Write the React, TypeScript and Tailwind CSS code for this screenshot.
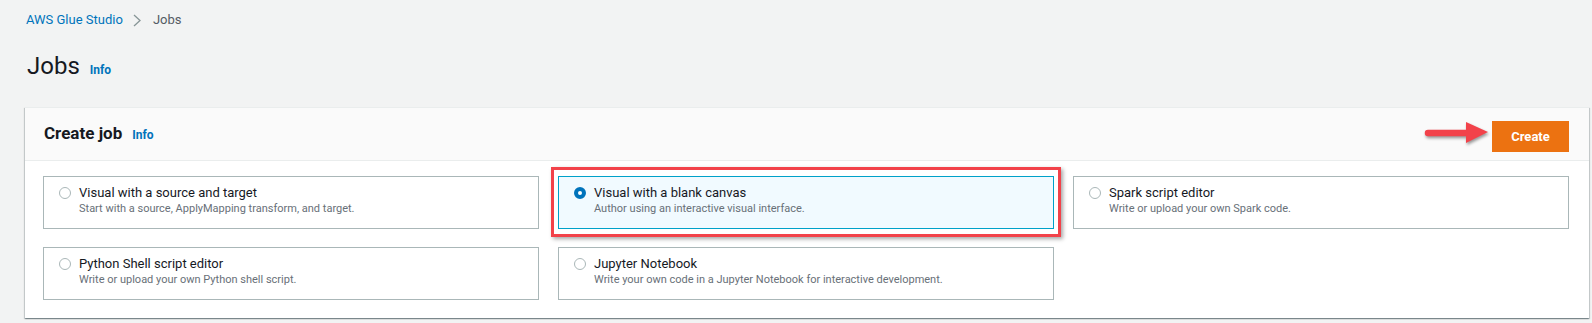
import React from "react";

type JobOption = {
  id: string;
  title: string;
  description: string;
};

const JOB_OPTIONS: JobOption[] = [
  {
    id: "visual-source-target",
    title: "Visual with a source and target",
    description: "Start with a source, ApplyMapping transform, and target.",
  },
  {
    id: "visual-blank",
    title: "Visual with a blank canvas",
    description: "Author using an interactive visual interface.",
  },
  {
    id: "spark",
    title: "Spark script editor",
    description: "Write or upload your own Spark code.",
  },
  {
    id: "python-shell",
    title: "Python Shell script editor",
    description: "Write or upload your own Python shell script.",
  },
  {
    id: "jupyter",
    title: "Jupyter Notebook",
    description:
      "Write your own code in a Jupyter Notebook for interactive development.",
  },
];

const SELECTED = "visual-blank";

// ── Breadcrumb chevron ───────────────────────────────────

function Chevron() {
  return (
    <svg width="8" height="13" viewBox="0 0 8 13" className="shrink-0">
      <polyline
        points="1,1 7,6.5 1,12"
        fill="none"
        stroke="#879596"
        strokeWidth="1.3"
      />
    </svg>
  );
}

// ── Annotation arrow ─────────────────────────────────────

function RedArrow() {
  return (
    <svg
      width="66"
      height="22"
      viewBox="0 0 66 22"
      className="absolute right-full top-[8px] mr-[2px] drop-shadow-[1px_2px_1.5px_rgba(0,0,0,0.4)]"
    >
      <line
        x1="4"
        y1="11"
        x2="46"
        y2="11"
        stroke="#f2424a"
        strokeWidth="6.5"
        strokeLinecap="round"
      />
      <polygon points="42,0 64,10 42,21" fill="#f2424a" />
    </svg>
  );
}

// ── Job option tile ──────────────────────────────────────

function JobTile({ option }: { option: JobOption }) {
  const selected = option.id === SELECTED;
  return (
    <div
      className={`relative h-[53px] border px-[15px] pt-[7px] ${
        selected
          ? "border-[#00a1c9] bg-[#f1faff]"
          : "border-[#aab7b8] bg-white"
      }`}
    >
      <div className="flex items-start gap-[8px]">
        <span
          className={`mt-[3px] h-[12px] w-[12px] shrink-0 rounded-full ${
            selected
              ? "border-[4px] border-[#0073bb] bg-white"
              : "border border-[#aab7b8] bg-white"
          }`}
        />
        <div className="flex flex-col">
          <span className="text-[13px] leading-[17px] text-[#16191f]">
            {option.title}
          </span>
          <span className="text-[11px] leading-[15px] text-[#687078]">
            {option.description}
          </span>
        </div>
      </div>
      {selected && (
        <div className="pointer-events-none absolute -top-[10px] -bottom-[9px] -left-[8px] -right-[8px] border-[3px] border-[#f2424a] shadow-[2px_2px_4px_rgba(0,0,0,0.35)]" />
      )}
    </div>
  );
}

export default function App() {
  return (
    <div className="min-h-[323px] bg-[#f2f3f3] pl-[25px] pr-[3px] font-['Roboto',sans-serif]">
      {/* Breadcrumb */}
      <div className="flex h-[40px] items-center gap-[10px] pl-px text-[13px]">
        <span className="text-[#0073bb]">AWS Glue Studio</span>
        <Chevron />
        <span className="ml-[2px] text-[#545b64]">Jobs</span>
      </div>

      {/* Page heading */}
      <div className="mt-[11px] mb-[26px] flex items-baseline gap-[10px] pl-[2px]">
        <h1 className="text-[24px] leading-[30px] text-[#16191f]">Jobs</h1>
        <span className="text-[12px] font-bold text-[#0073bb]">Info</span>
      </div>

      {/* Create job panel */}
      <div className="border-t border-[#eaeded] bg-white shadow-[0_1px_1px_0_rgba(0,28,36,0.3),1px_1px_1px_0_rgba(0,28,36,0.15),-1px_1px_1px_0_rgba(0,28,36,0.15)]">
        <div className="flex h-[53px] items-center justify-between border-b border-[#eaeded] bg-[#fafafa] pl-[19px] pr-[20px]">
          <div className="flex items-baseline gap-[10px]">
            <h2 className="text-[17px] font-bold text-[#16191f]">
              Create job
            </h2>
            <span className="text-[12px] font-bold text-[#0073bb]">Info</span>
          </div>
          <div className="relative mt-[6px] self-start pt-[7px]">
            <RedArrow />
            <button className="h-[31px] w-[77px] bg-[#ec7211] text-[13px] font-bold text-white">
              Create
            </button>
          </div>
        </div>

        <div className="grid grid-cols-3 gap-x-[19px] gap-y-[18px] pt-[15px] pb-[18px] pl-[18px] pr-[20px]">
          {JOB_OPTIONS.map((option) => (
            <JobTile key={option.id} option={option} />
          ))}
        </div>
      </div>
    </div>
  );
}
